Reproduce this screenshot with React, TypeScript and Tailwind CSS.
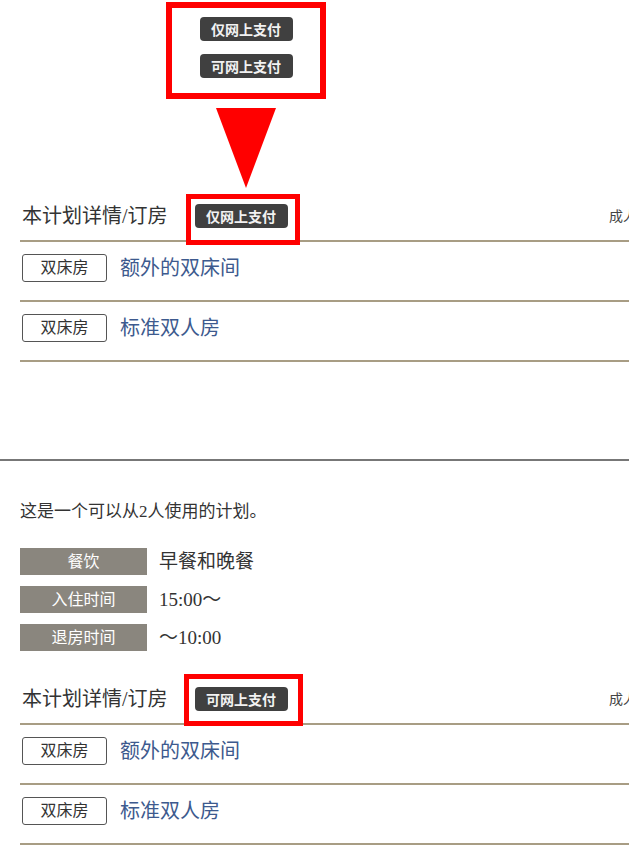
const SERIF = 'font-["Liberation_Serif","Noto_Sans_CJK_SC",serif]';

function PayBadge({ label }: { label: string }) {
  return (
    <span className='flex h-[24px] w-[93px] items-center justify-center rounded-[4px] bg-[#404040] font-["Noto_Sans_CJK_SC",sans-serif] text-[14px] font-bold leading-none text-[#f2f2f2]'>
      {label}
    </span>
  );
}

function RoomRow({ name }: { name: string }) {
  return (
    <div className="flex items-center gap-[13px] border-b-2 border-[#a89d84] pb-[18px] pl-[2px] pt-[12px]">
      <span className="flex h-[28px] w-[85px] items-center justify-center rounded-[3px] border-[1.5px] border-[#555] text-[16px] leading-none text-[#333]">
        双床房
      </span>
      <span className="text-[20px] leading-none text-[#3d5a8e]">{name}</span>
    </div>
  );
}

function PlanHeader({ badge, box }: { badge: string; box: string }) {
  return (
    <div className="flex items-center border-b-2 border-[#a89d84] pb-[12px] pl-[2px] pt-[16px]">
      <span className="text-[20px] leading-none text-[#333]">本计划详情/订房</span>
      <div className="relative ml-[27px]">
        <PayBadge label={badge} />
        <div className={box} />
      </div>
      <span className="-mr-[8px] ml-auto whitespace-nowrap text-[14px] text-[#444]">成人</span>
    </div>
  );
}

const INFO = [
  { k: '餐饮', v: '早餐和晚餐' },
  { k: '入住时间', v: '15:00～' },
  { k: '退房时间', v: '～10:00' },
];

export default function App() {
  return (
    <div className={`h-[866px] w-[629px] overflow-hidden bg-white ${SERIF}`}>
      {/* legend */}
      <div className="ml-[166px] mt-[2px] flex h-[97px] w-[160px] flex-col items-center gap-[13px] border-[6px] border-[#ff0000] pt-[9px]">
        <PayBadge label="仅网上支付" />
        <PayBadge label="可网上支付" />
      </div>
      <svg className="ml-[216px] mt-[9px] block" width="60" height="80" viewBox="0 0 60 80">
        <polygon points="0,0 60,0 30,80" fill="#ff0000" />
      </svg>

      {/* plan 1 */}
      <section className="pl-[20px]">
        <PlanHeader
          badge="仅网上支付"
          box="absolute -left-[9px] -top-[10px] h-[51px] w-[114px] border-[5px] border-[#ff0000]"
        />
        <RoomRow name="额外的双床间" />
        <RoomRow name="标准双人房" />
      </section>

      <div className="mt-[97px] h-[2px] bg-[#777]" />

      {/* plan 2 */}
      <section className="pl-[20px]">
        <p className="mt-[38px] text-[17px] leading-[25px] text-[#333]">这是一个可以从2人使用的计划。</p>
        <div className="mt-[24px] flex flex-col gap-[11px]">
          {INFO.map(r => (
            <div key={r.k} className="flex h-[27px] items-center gap-[12px]">
              <span className="flex h-[27px] w-[127px] items-center justify-center bg-[#8a867e] text-[16px] leading-none text-white">
                {r.k}
              </span>
              <span className="text-[19px] leading-none text-[#333]">{r.v}</span>
            </div>
          ))}
        </div>
        <div className="mt-[20px]">
          <PlanHeader
            badge="可网上支付"
            box="absolute -left-[11px] -top-[13px] h-[52px] w-[119px] border-[5px] border-[#ff0000]"
          />
        </div>
        <RoomRow name="额外的双床间" />
        <RoomRow name="标准双人房" />
      </section>
    </div>
  );
}
